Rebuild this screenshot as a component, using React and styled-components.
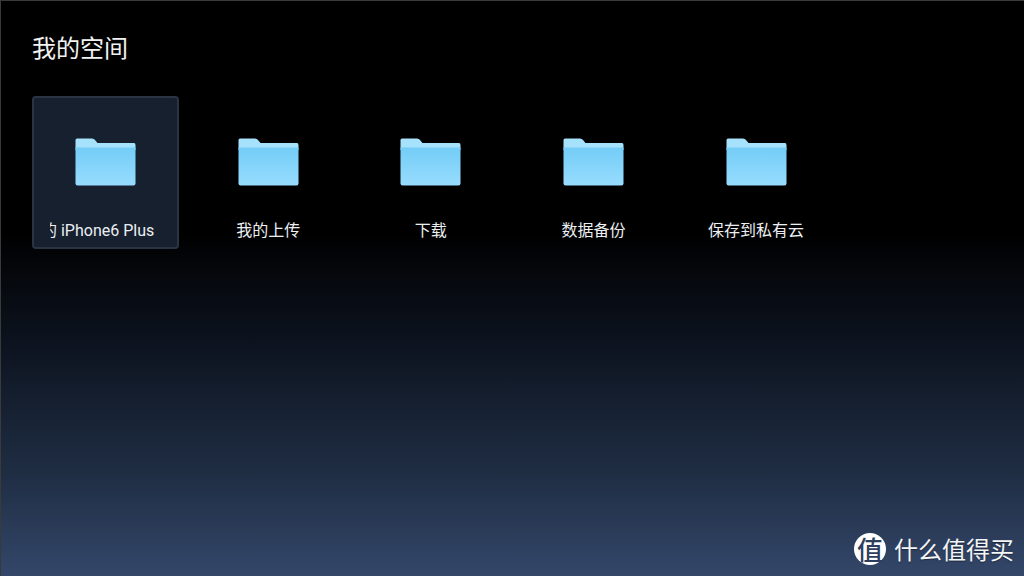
import React from 'react';
import styled, { createGlobalStyle } from 'styled-components';

const folders = ['我的 iPhone6 Plus', '我的上传', '下载', '数据备份', '保存到私有云'];

function FolderIcon() {
  return (
    <svg width="61" height="48" viewBox="0 0 61 48">
      <defs>
        <linearGradient id="folderBody" x1="0" y1="0" x2="0" y2="1">
          <stop offset="0" stopColor="#74cdf7" />
          <stop offset="1" stopColor="#97dcfe" />
        </linearGradient>
      </defs>
      <path d="M2 0.5H17Q19 0.5 20 2L22.5 5H59Q60.5 5 60.5 7V12H0.5V2Q0.5 0.5 2 0.5Z" fill="#a6e2fc" />
      <path d="M0.5 9.5H60.5V45.5Q60.5 47.5 58.5 47.5H2.5Q0.5 47.5 0.5 45.5Z" fill="url(#folderBody)" />
    </svg>
  );
}

function App() {
  return (
    <Screen>
      <GlobalStyle />
      <Title>我的空间</Title>
      <FolderRow>
        {folders.map((name, i) => (
          <Tile key={name} $active={i === 0}>
            <FolderIcon />
            <Label $scrolled={i === 0}>
              <LabelText $scrolled={i === 0}>{name}</LabelText>
            </Label>
          </Tile>
        ))}
      </FolderRow>
      <Watermark>
        <Badge>
          <BadgeChar>值</BadgeChar>
        </Badge>
        <BrandName>什么值得买</BrandName>
      </Watermark>
    </Screen>
  );
}

export default App;

const GlobalStyle = createGlobalStyle`
  html, body {
    margin: 0;
    padding: 0;
    background: #000;
  }
`;

const Screen = styled.div`
  width: 1024px;
  height: 576px;
  box-sizing: border-box;
  overflow: hidden;
  position: relative;
  padding: 33px 0 0 31px;
  border-top: 1px solid #3a3a3a;
  border-left: 1px solid #3a3a3a;
  background: linear-gradient(180deg, #000 0%, #000 40%, #0d1420 60%, #1f2d43 82%, #34476a 100%);
  font-family: "Noto Sans CJK SC", "Liberation Sans", sans-serif;
`;

const Title = styled.h1`
  margin: 0;
  height: 26px;
  line-height: 26px;
  font-size: 24px;
  font-weight: 400;
  color: #f2f2f2;
`;

const FolderRow = styled.div`
  display: flex;
  gap: 15.67px;
  margin: 36px 0 0 0;
`;

const Tile = styled.div`
  width: 147px;
  height: 153px;
  box-sizing: border-box;
  padding-top: 40px;
  display: flex;
  flex-direction: column;
  align-items: center;
  border-radius: 4px;
  border: 2px solid ${(p) => (p.$active ? '#2a3443' : 'transparent')};
  background: ${(p) => (p.$active ? '#16202f' : 'transparent')};
`;

const Label = styled.div`
  width: 111px;
  margin-top: 34px;
  height: 22px;
  line-height: 22px;
  overflow: hidden;
  white-space: nowrap;
  text-align: ${(p) => (p.$scrolled ? 'left' : 'center')};
  font-family: "Roboto", "Noto Sans CJK SC", sans-serif;
  font-size: 16px;
  color: #eceff2;
`;

const LabelText = styled.span`
  display: inline-block;
  margin-left: ${(p) => (p.$scrolled ? '-25px' : '0')};
`;

const Watermark = styled.div`
  position: absolute;
  right: 10px;
  bottom: 11px;
  display: flex;
  align-items: center;
  gap: 8px;
`;

const Badge = styled.div`
  width: 32px;
  height: 32px;
  border-radius: 50%;
  background: #fff;
  display: flex;
  align-items: center;
  justify-content: center;
`;

const BadgeChar = styled.span`
  font-family: "Noto Sans CJK SC", sans-serif;
  font-size: 26px;
  line-height: 32px;
  font-weight: 500;
  color: #2d3f5e;
`;

const BrandName = styled.span`
  font-family: "Noto Sans CJK SC", sans-serif;
  font-size: 24px;
  line-height: 32px;
  color: #f4f5f7;
  text-shadow: 0 1px 1px rgba(0, 0, 0, 0.4);
`;
